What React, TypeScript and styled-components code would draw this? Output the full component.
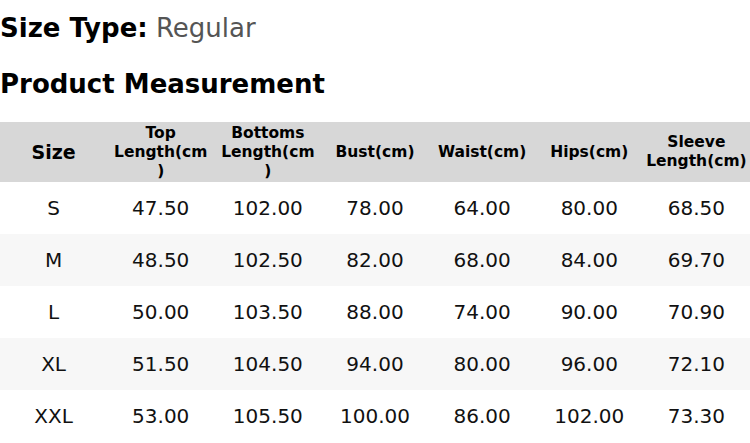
import React from "react";
import styled, { createGlobalStyle } from "styled-components";

const Global = createGlobalStyle`
  html, body { margin: 0; padding: 0; background: #fff; }
  body { font-family: "DejaVu Sans", "Noto Sans", sans-serif; color: #000; }
`;

const Page = styled.div`
  width: 750px;
  display: flex;
  flex-direction: column;
`;

const SizeType = styled.div`
  font-size: 26px;
  line-height: 56px;
  height: 56px;
  white-space: nowrap;
`;

const Label = styled.span`
  font-weight: bold;
  color: #000;
`;

const Value = styled.span`
  color: #555;
`;

const Heading = styled.h2`
  margin: 0 0 10px;
  font-size: 26px;
  font-weight: bold;
  line-height: 56px;
  height: 56px;
`;

const Table = styled.div`
  display: grid;
  grid-template-columns: repeat(7, 1fr);
  width: 750px;
`;

const HeadCell = styled.div<{ $big?: boolean; $pad?: number }>`
  background: #d7d7d7;
  height: 60px;
  display: flex;
  align-items: center;
  justify-content: center;
  text-align: center;
  font-weight: bold;
  font-size: ${(p) => (p.$big ? "19px" : "15.5px")};
  line-height: ${(p) => (p.$big ? "22px" : "19px")};
  padding: 0 ${(p) => p.$pad ?? 4}px;
  overflow-wrap: anywhere;
  min-width: 0;
`;

const Cell = styled.div<{ $alt: boolean }>`
  background: ${(p) => (p.$alt ? "#f7f7f7" : "#fff")};
  height: 52px;
  display: flex;
  align-items: center;
  justify-content: center;
  font-size: 20px;
  color: #111;
`;

const headers = [
  "Size",
  "Top Length(cm)",
  "Bottoms Length(cm)",
  "Bust(cm)",
  "Waist(cm)",
  "Hips(cm)",
  "Sleeve Length(cm)",
];

const rows = [
  ["S", "47.50", "102.00", "78.00", "64.00", "80.00", "68.50"],
  ["M", "48.50", "102.50", "82.00", "68.00", "84.00", "69.70"],
  ["L", "50.00", "103.50", "88.00", "74.00", "90.00", "70.90"],
  ["XL", "51.50", "104.50", "94.00", "80.00", "96.00", "72.10"],
  ["XXL", "53.00", "105.50", "100.00", "86.00", "102.00", "73.30"],
];

export default function App() {
  return (
    <Page>
      <Global />
      <SizeType>
        <Label>Size Type:</Label> <Value>Regular</Value>
      </SizeType>
      <Heading>Product Measurement</Heading>
      <Table>
        {headers.map((h, i) => (
          <HeadCell key={h} $big={i === 0} $pad={i === 6 ? 0 : 4}>
            {h}
          </HeadCell>
        ))}
        {rows.map((r, ri) =>
          r.map((c, ci) => (
            <Cell key={`${ri}-${ci}`} $alt={ri % 2 === 1}>
              {c}
            </Cell>
          ))
        )}
      </Table>
    </Page>
  );
}
